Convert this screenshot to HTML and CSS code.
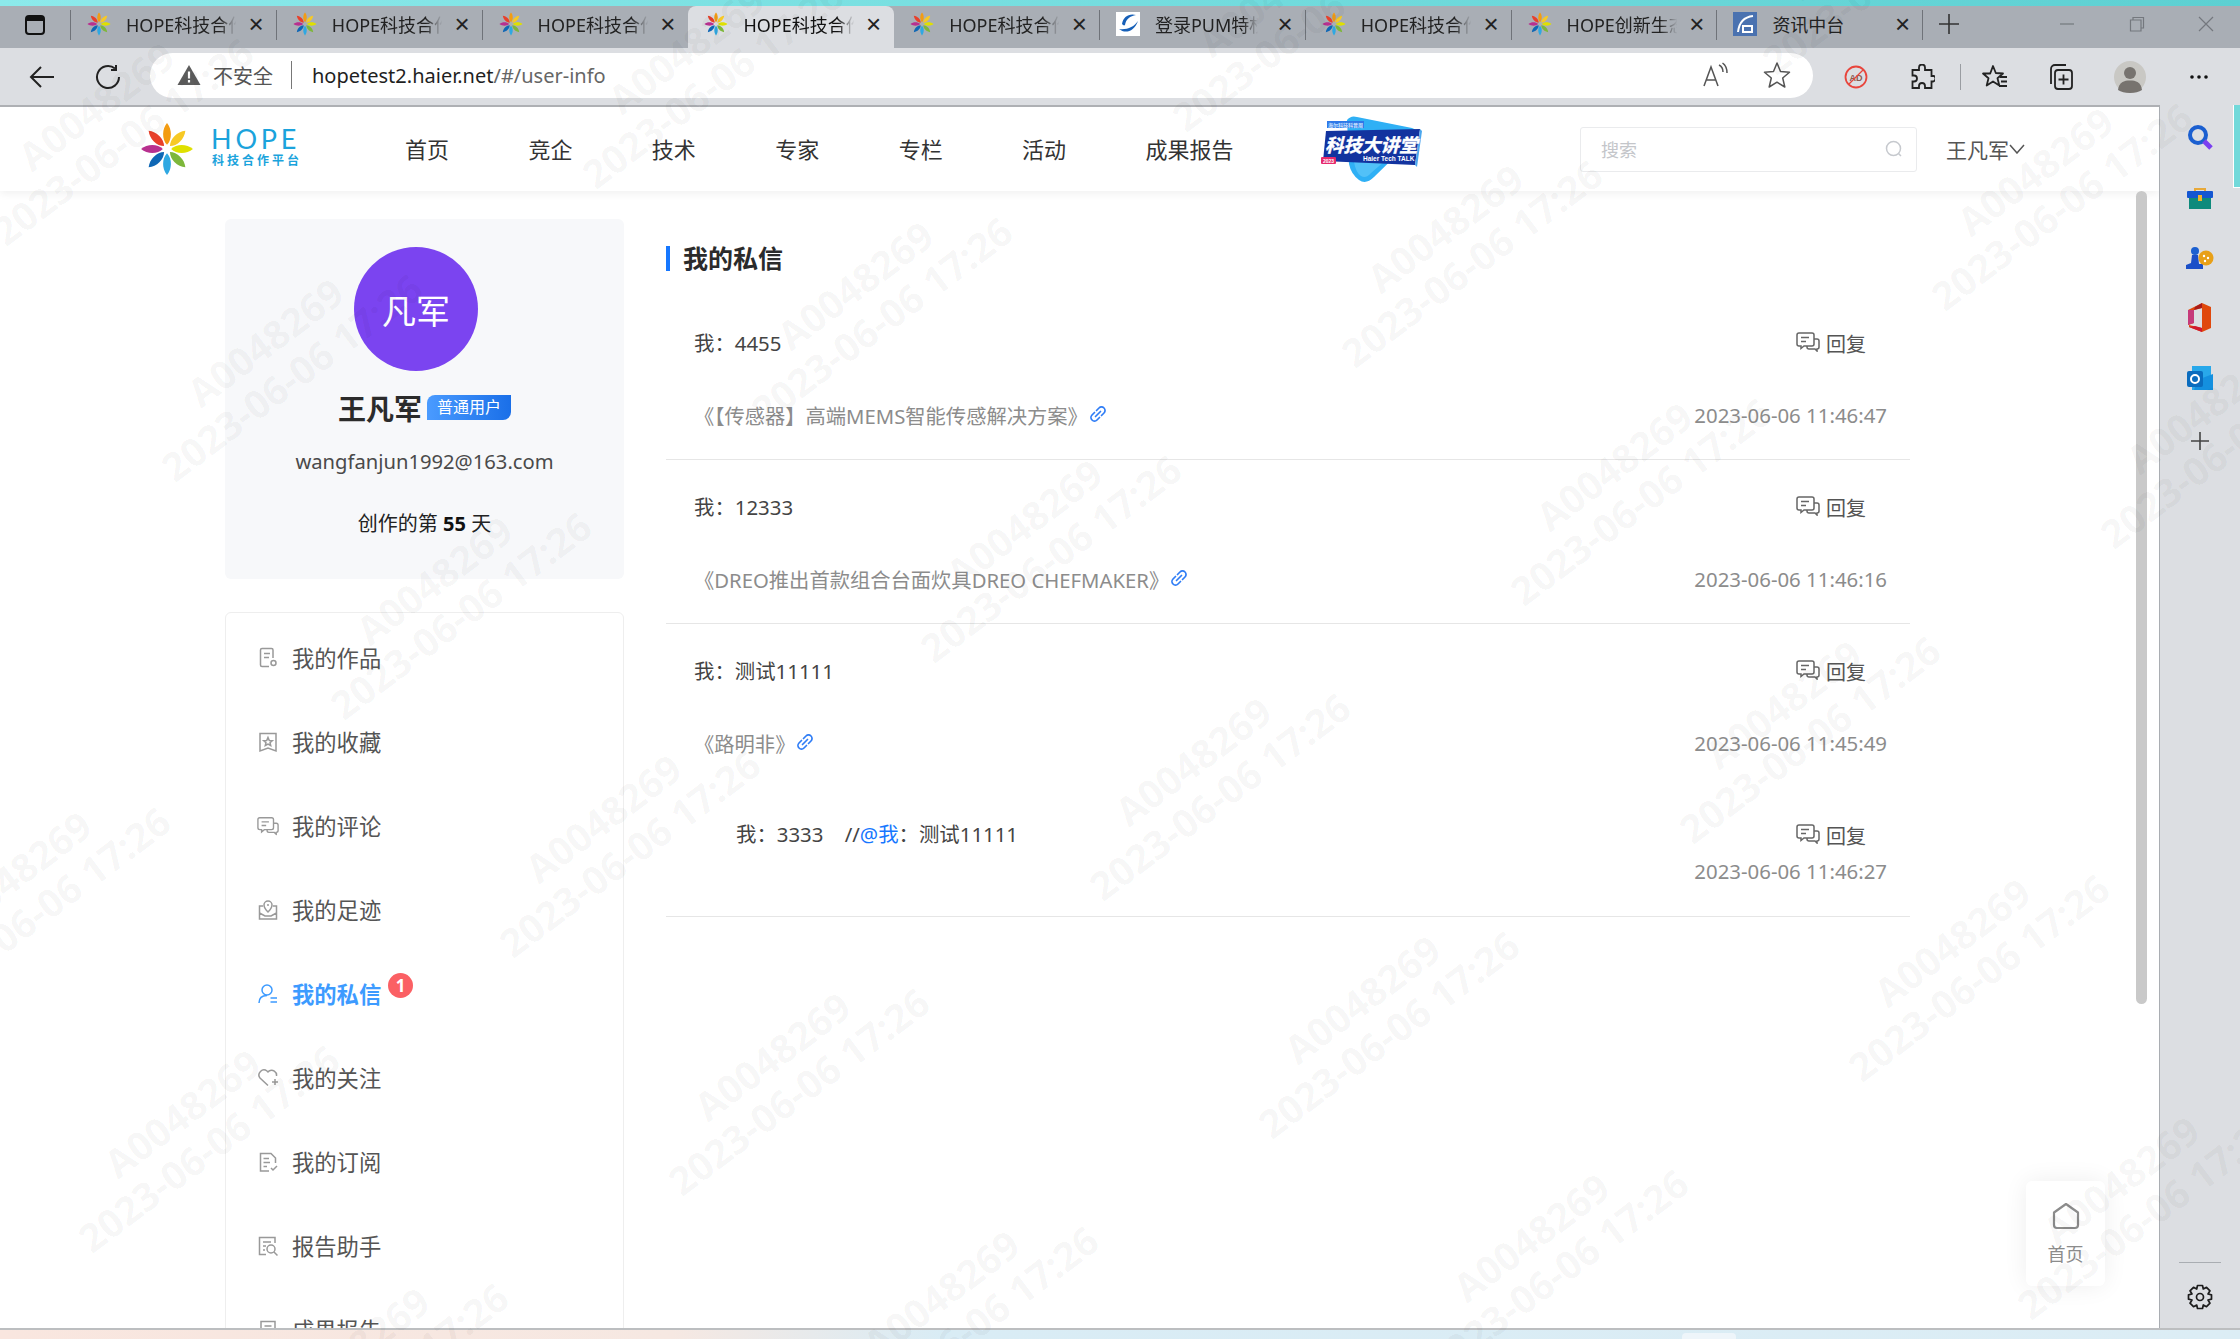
FILE: index.html
```html
<!DOCTYPE html>
<html lang="zh-CN">
<head>
<meta charset="utf-8">
<title>HOPE科技合作平台</title>
<link rel="stylesheet" href="styles.css">
</head>
<body>
<svg class="defs" width="0" height="0">
  <defs>
    <symbol id="flower" viewBox="-26 -26 52 52">
      <g id="petal-set">
        <path fill="#f39c12" d="M0-4C5-9 5-19 0-25C-5-19-5-9 0-4Z"/>
        <path fill="#f7c925" transform="rotate(45)" d="M0-4C5-9 5-19 0-25C-5-19-5-9 0-4Z"/>
        <path fill="#dfe000" transform="rotate(90)" d="M0-4C5-9 5-19 0-25C-5-19-5-9 0-4Z"/>
        <path fill="#7db73a" transform="rotate(135)" d="M0-4C5-9 5-19 0-25C-5-19-5-9 0-4Z"/>
        <path fill="#2fa8e2" transform="rotate(180)" d="M0-4C5-9 5-19 0-25C-5-19-5-9 0-4Z"/>
        <path fill="#0f67b5" transform="rotate(225)" d="M0-4C5-9 5-19 0-25C-5-19-5-9 0-4Z"/>
        <path fill="#b8308f" transform="rotate(270)" d="M0-4C5-9 5-19 0-25C-5-19-5-9 0-4Z"/>
        <path fill="#e8402b" transform="rotate(315)" d="M0-4C5-9 5-19 0-25C-5-19-5-9 0-4Z"/>
      </g>
    </symbol>
    <symbol id="reply" viewBox="0 0 24 20">
      <path fill="none" stroke="currentColor" stroke-width="1.5" d="M3 1h13a2 2 0 0 1 2 2v9a2 2 0 0 1-2 2H8l-3 2.500V14H3a2 2 0 0 1-2-2V3a2 2 0 0 1 2-2Z"/>
      <path fill="none" stroke="currentColor" stroke-width="1.5" d="M5 5.500h8M5 9.500h5M18 7h3a2 2 0 0 1 2 2v6a2 2 0 0 1-2 2v2l-2-2h-6a2 2 0 0 1-2-2v-1"/>
    </symbol>
    <symbol id="link" viewBox="0 0 18 18">
      <path fill="none" stroke="currentColor" stroke-width="1.700" stroke-linecap="round" d="M7.500 5.500l2.500-2.500a3.500 3.500 0 0 1 5 5l-2.500 2.500M10.500 12.500l-2.500 2.500a3.500 3.500 0 0 1-5-5l2.500-2.500M6.500 11.500l5-5"/>
    </symbol>
    <g id="wm">
      <text class="wm-text" text-anchor="middle" transform="rotate(-37)">A0048269</text>
      <text class="wm-text" text-anchor="middle" y="44" transform="rotate(-37)">2023-06-06 17:26</text>
    </g>
  </defs>
</svg>

<div class="strip"></div>

<div class="tabbar">
  <div class="win-btn">
    <svg width="22" height="22" viewBox="0 0 22 22"><rect x="2" y="2" width="18" height="18" rx="3" fill="none" stroke="#111" stroke-width="2"/><rect x="2" y="2" width="18" height="5" fill="#111"/></svg>
  </div>
  <div class="tab"><svg class="fav"><use href="#flower"/></svg><span class="tab-title">HOPE科技合作</span><span class="tab-x">×</span></div>
  <div class="tab"><svg class="fav"><use href="#flower"/></svg><span class="tab-title">HOPE科技合作</span><span class="tab-x">×</span></div>
  <div class="tab tab-before-active"><svg class="fav"><use href="#flower"/></svg><span class="tab-title">HOPE科技合作</span><span class="tab-x">×</span></div>
  <div class="tab tab-active"><svg class="fav"><use href="#flower"/></svg><span class="tab-title">HOPE科技合作</span><span class="tab-x">×</span></div>
  <div class="tab"><svg class="fav"><use href="#flower"/></svg><span class="tab-title">HOPE科技合作</span><span class="tab-x">×</span></div>
  <div class="tab"><svg class="fav" viewBox="0 0 24 24"><rect width="24" height="24" fill="#fff"/><path fill="#1760b8" d="M3 17C9 22 18 20 22 9C18 15 11 18 3 17ZM6 12C7 5 13 1 20 3C14 4 10 7 9 13C8 14 7 13 6 12Z"/></svg><span class="tab-title">登录PUM特权</span><span class="tab-x">×</span></div>
  <div class="tab"><svg class="fav"><use href="#flower"/></svg><span class="tab-title">HOPE科技合作</span><span class="tab-x">×</span></div>
  <div class="tab"><svg class="fav"><use href="#flower"/></svg><span class="tab-title">HOPE创新生态</span><span class="tab-x">×</span></div>
  <div class="tab"><svg class="fav" viewBox="0 0 24 24"><rect width="24" height="24" fill="#4a72b0"/><path fill="none" stroke="#fff" stroke-width="2" d="M5 20C6 11 11 5 20 4M10 20V14H19V20Z"/></svg><span class="tab-title tab-title-plain">资讯中台</span><span class="tab-x">×</span></div>
  <div class="new-tab">
    <svg width="22" height="22" viewBox="0 0 22 22"><path d="M11 1V21M1 11H21" stroke="#333" stroke-width="1.600"/></svg>
  </div>
  <div class="win-controls">
    <svg width="16" height="16" viewBox="0 0 16 16"><path d="M1 8H15" stroke="#74787e" stroke-width="1.200"/></svg>
    <svg width="16" height="16" viewBox="0 0 16 16"><path d="M1.500 4H12V15H1.500ZM4 4V1.500H14.500V12H12" fill="none" stroke="#74787e" stroke-width="1.200"/></svg>
    <svg width="16" height="16" viewBox="0 0 16 16"><path d="M1 1L15 15M15 1L1 15" stroke="#74787e" stroke-width="1.200"/></svg>
  </div>
</div>

<div class="toolbar">
  <div class="nav-btns">
    <svg width="26" height="24" viewBox="0 0 26 24"><path d="M25 12H2M12 2L2 12L12 22" fill="none" stroke="#222" stroke-width="2"/></svg>
    <svg width="26" height="26" viewBox="0 0 26 26"><path d="M20 4.500A11 11 0 1 0 24 13M21 1V6H16" fill="none" stroke="#222" stroke-width="2"/></svg>
  </div>
  <div class="omnibox">
    <svg width="24" height="22" viewBox="0 0 24 22"><path d="M12 1L23.500 21H.5Z" fill="#5c5c5c"/><path d="M12 7.500V14.500M12 16V18.500" stroke="#fff" stroke-width="2.200"/></svg>
    <span class="insecure">不安全</span>
    <span class="omni-sep"></span>
    <span class="url"><span class="url-host">hopetest2.haier.net</span>/#/user-info</span>
    <svg class="omni-read" width="28" height="26" viewBox="0 0 28 26"><path d="M1 24L8 5L15 24M3.500 18H12.500" fill="none" stroke="#555" stroke-width="1.500"/><path d="M16 3Q20 5 20 10M19.500 1Q24 4 24 11" fill="none" stroke="#555" stroke-width="1.500"/></svg>
    <svg class="omni-star" width="28" height="28" viewBox="0 0 28 28"><path d="M14 2L17.500 10.500L26.500 11.200L19.700 17L21.800 26L14 21.200L6.200 26L8.300 17L1.500 11.200L10.500 10.500Z" fill="none" stroke="#555" stroke-width="1.500" stroke-linejoin="round"/></svg>
  </div>
  <div class="tool-icons">
    <svg class="ti-ad" width="24" height="24" viewBox="0 0 24 24"><circle cx="12" cy="12" r="10.500" fill="none" stroke="#e8453c" stroke-width="1.800"/><text class="ad-text" x="12" y="15.500" text-anchor="middle">AD</text><path d="M4.500 19.500L19.500 4.500" stroke="#e8453c" stroke-width="1.200"/></svg>
    <svg class="ti-ext" width="26" height="26" viewBox="0 0 26 26"><path d="M10 3.500a3 3 0 0 1 6 0V6h6.500v6H25a3 3 0 0 1-1 5.500h-1.500V24H16v-2a3 3 0 0 0-6 0v2H3.500v-6.500H5a3 3 0 0 0 0-6H3.500V6H10Z" fill="none" stroke="#222" stroke-width="1.800"/></svg>
    <span class="tool-sep"></span>
    <svg class="ti-fav" width="28" height="28" viewBox="0 0 28 28"><path d="M12 3L14.800 10L22 10.500L16.500 15.200L18.300 22.500L12 18.500L5.700 22.500L7.500 15.200L2 10.500L9.200 10.500Z" fill="none" stroke="#222" stroke-width="1.800" stroke-linejoin="round"/><path d="M19 14H26M20 18.500H26M18 23H26" stroke="#222" stroke-width="1.800"/></svg>
    <svg class="ti-col" width="28" height="28" viewBox="0 0 28 28"><path d="M4 21V6a4 4 0 0 1 4-4H19" fill="none" stroke="#222" stroke-width="1.800"/><rect x="8" y="7" width="17" height="19" rx="3" fill="none" stroke="#222" stroke-width="1.800"/><path d="M16.500 11.500V21.500M11.500 16.500H21.500" stroke="#222" stroke-width="1.800"/></svg>
    <svg class="ti-user" width="32" height="32" viewBox="0 0 32 32"><circle cx="16" cy="16" r="16" fill="#c9c8c4"/><circle cx="16" cy="12" r="6" fill="#77736f"/><path d="M4 29C5 21 10 19.500 16 19.500S27 21 28 29C25 31 21 32 16 32S7 31 4 29Z" fill="#77736f"/></svg>
    <svg class="ti-more" width="20" height="6" viewBox="0 0 20 6"><circle cx="3" cy="3" r="1.800" fill="#111"/><circle cx="10" cy="3" r="1.800" fill="#111"/><circle cx="17" cy="3" r="1.800" fill="#111"/></svg>
  </div>
</div>

<div class="viewport">
  <div class="page">
    <header class="site-header">
      <div class="logo">
        <svg class="logo-flower"><use href="#flower"/></svg>
        <div class="logo-text">
          <span class="logo-hope">HOPE</span>
          <span class="logo-sub">科技合作平台</span>
        </div>
      </div>
      <nav class="site-nav">
        <span>首页</span><span>竞企</span><span>技术</span><span>专家</span><span>专栏</span><span>活动</span><span>成果报告</span>
      </nav>
      <svg class="talk-logo" width="104" height="68" viewBox="0 0 104 68">
        <path d="M27 4Q31-1 37 1L92 12Q100 15 95 21L54 61Q46 69 39 64Q31 58 29 48Z" fill="#2fb0f5"/>
        <path d="M34 46Q36 57 41 60Q46 63 51 57L66 44Z" fill="#52c1f8"/>
        <path d="M6 15L100 13L95 49L3 45Z" fill="#12339f"/>
        <path d="M100 13L102 15L97 51L95 49Z" fill="#4ba7ee"/>
        <rect x="7" y="5" width="37" height="7" fill="#2e78e8"/>
        <text class="tl-top" x="25.500" y="10.500" text-anchor="middle">海尔科技科普周</text>
        <text class="tl-main" x="5" y="36">科技大讲堂</text>
        <text class="tl-en" x="43" y="45">Haier Tech TALK</text>
        <rect x="1" y="41" width="15" height="7" rx="1" fill="#e62a6d"/>
        <text class="tl-year" x="8.500" y="46.500" text-anchor="middle">2023</text>
      </svg>
      <div class="search">
        <span>搜索</span>
        <svg width="18" height="18" viewBox="0 0 18 18"><circle cx="8.500" cy="8.500" r="7" fill="none" stroke="#c6c9ce" stroke-width="1.500"/><path d="M13.500 13.500L16 16" stroke="#c6c9ce" stroke-width="1.500"/></svg>
      </div>
      <div class="user-name">王凡军<svg width="16" height="10" viewBox="0 0 16 10"><path d="M1 1L8 9L15 1" fill="none" stroke="#555" stroke-width="1.500"/></svg></div>
    </header>

    <div class="content">
      <aside class="side">
        <section class="profile">
          <div class="avatar">凡军</div>
          <div class="name-row"><span class="name">王凡军</span><span class="tag">普通用户</span></div>
          <div class="email">wangfanjun1992@163.com</div>
          <div class="days">创作的第 <b>55</b> 天</div>
        </section>
        <ul class="menu">
          <li class="menu-item"><svg class="mi" viewBox="0 0 22 22"><path d="M16 11V3a1.500 1.500 0 0 0-1.500-1.500H5A1.500 1.500 0 0 0 3.500 3v15A1.500 1.500 0 0 0 5 19.500h7M7 6.500h6M7 10.500h5"/><circle cx="16.500" cy="16" r="2.500"/></svg><span>我的作品</span></li>
          <li class="menu-item"><svg class="mi" viewBox="0 0 22 22"><path d="M3 2.500H19V20L11 17L3 20ZM11 6.500L12.300 9.500L15.300 9.700L13 11.700L13.700 14.500L11 13L8.300 14.500L9 11.700L6.700 9.700L9.700 9.500Z"/></svg><span>我的收藏</span></li>
          <li class="menu-item"><svg class="mi" viewBox="0 0 24 20"><use href="#reply"/></svg><span>我的评论</span></li>
          <li class="menu-item"><svg class="mi" viewBox="0 0 22 22"><path d="M6 7H2.500V20H19.500V7H16M2.500 14L8 17H14L19.500 14"/><path d="M11 13C8 10 7 8 7 6A4 4 0 0 1 15 6C15 8 14 10 11 13ZM11 5V7"/></svg><span>我的足迹</span></li>
          <li class="menu-item menu-active"><svg class="mi" viewBox="0 0 22 22"><circle cx="10" cy="7" r="5"/><path d="M2 20C2 15 5 12.500 10 12.500M13.500 15H20M13.500 19H20"/></svg><span>我的私信</span><span class="badge">1</span></li>
          <li class="menu-item"><svg class="mi" viewBox="0 0 22 22"><path d="M11 18.500L3 11A5 5 0 0 1 10 4L11 5L12 4A5 5 0 0 1 19.500 9M15 15H21M18 12V18"/></svg><span>我的关注</span></li>
          <li class="menu-item"><svg class="mi" viewBox="0 0 22 22"><path d="M12 20H3.500V2.500H14L18.500 7V12M6.500 7.500H12M6.500 11.500H13M6.500 15.500H10M14 17L16 19L20 15"/></svg><span>我的订阅</span></li>
          <li class="menu-item"><svg class="mi" viewBox="0 0 22 22"><path d="M18 8V2.500H2.500V19.500H9M6 7H14M6 11H9M6 15H8"/><circle cx="14" cy="14" r="4"/><path d="M17 17L20.500 20.500"/></svg><span>报告助手</span></li>
          <li class="menu-item"><svg class="mi" viewBox="0 0 22 22"><path d="M4 2.500H18V19.500H4ZM7.500 7H14.500M7.500 11H14.500"/></svg><span>成果报告</span></li>
        </ul>
      </aside>

      <main class="main">
        <h1 class="title">我的私信</h1>

        <article class="msg">
          <div class="row">
            <span class="msg-text">我：4455</span>
            <span class="reply-btn"><svg class="reply-ic"><use href="#reply"/></svg>回复</span>
          </div>
          <div class="row row-gap">
            <span class="source">《【传感器】高端MEMS智能传感解决方案》<svg class="link-ic"><use href="#link"/></svg></span>
            <span class="time">2023-06-06 11:46:47</span>
          </div>
        </article>

        <article class="msg">
          <div class="row">
            <span class="msg-text">我：12333</span>
            <span class="reply-btn"><svg class="reply-ic"><use href="#reply"/></svg>回复</span>
          </div>
          <div class="row row-gap">
            <span class="source">《DREO推出首款组合台面炊具DREO CHEFMAKER》<svg class="link-ic"><use href="#link"/></svg></span>
            <span class="time">2023-06-06 11:46:16</span>
          </div>
        </article>

        <article class="msg">
          <div class="row">
            <span class="msg-text">我：测试11111</span>
            <span class="reply-btn"><svg class="reply-ic"><use href="#reply"/></svg>回复</span>
          </div>
          <div class="row row-gap">
            <span class="source">《路明非》<svg class="link-ic"><use href="#link"/></svg></span>
            <span class="time">2023-06-06 11:45:49</span>
          </div>
          <div class="row nested">
            <span class="msg-text">我：3333&nbsp;&nbsp;&nbsp;&nbsp;//<span class="at">@我</span>：测试11111</span>
            <span class="reply-btn reply-nested"><svg class="reply-ic"><use href="#reply"/></svg>回复</span>
          </div>
          <div class="row row-end">
            <span class="time">2023-06-06 11:46:27</span>
          </div>
        </article>
      </main>
    </div>

    <div class="scrollbar"></div>

    <div class="home-float">
      <svg width="28" height="28" viewBox="0 0 28 28"><path d="M14 2L26 10.500V23a3 3 0 0 1-3 3H5a3 3 0 0 1-3-3V10.500Z" fill="none" stroke="#8c8c8c" stroke-width="2.200" stroke-linejoin="round"/></svg>
      <span>首页</span>
    </div>
  </div>

  <aside class="panel">
    <div class="panel-top">
      <span class="panel-slot"><svg width="26" height="26" viewBox="0 0 26 26"><circle cx="11" cy="10" r="8" fill="none" stroke="#1b5fd0" stroke-width="4"/><path d="M17 16L24 23" stroke="#7a3ff0" stroke-width="5"/></svg></span>
      <span class="panel-slot"><svg width="26" height="22" viewBox="0 0 26 22"><path d="M8 5V2H18V5" fill="none" stroke="#e8a93a" stroke-width="2"/><rect y="4" width="26" height="7" rx="1" fill="#1456d2"/><rect x="2" y="11" width="22" height="11" fill="#0e8a7c"/><rect x="11" y="8" width="4" height="6" fill="#f0b32c"/></svg></span>
      <span class="panel-slot"><svg width="28" height="24" viewBox="0 0 28 24"><circle cx="9" cy="5" r="4" fill="#1b5fd0"/><path d="M6 9H12L13 18H17V23H0V19L5 17Z" fill="#1b4fc8"/><circle cx="20" cy="12" r="7.500" fill="#e8a018"/><circle cx="18" cy="10" r="1.200" fill="#fff"/><circle cx="22" cy="12" r="1.200" fill="#fff"/><circle cx="19" cy="15" r="1.200" fill="#fff"/></svg></span>
      <span class="panel-slot"><svg width="26" height="30" viewBox="0 0 26 30"><path d="M15 0L24 4V25L15 29L2 24V22L15 25V5L7 7V20L1 22V7Z" fill="#e0480c"/><path d="M1 7L7 7V20L1 22Z" fill="#c63a7a"/><path d="M15 0L8 4L7 7L15 5Z" fill="#a81a1a"/><path d="M2 24L15 29V25L8 23Z" fill="#d0182e"/></svg></span>
      <span class="panel-slot"><svg width="26" height="26" viewBox="0 0 26 26"><path d="M5 1H24V25H5Z" fill="#28a8ea"/><path d="M10 15L26 9V25H7Z" fill="#1490df"/><rect y="6" width="16" height="16" rx="2" fill="#0a6cbe"/><circle cx="8" cy="14" r="4" fill="none" stroke="#fff" stroke-width="2"/></svg></span>
      <span class="panel-slot panel-plus"><svg width="18" height="18" viewBox="0 0 18 18"><path d="M9 0V18M0 9H18" stroke="#444" stroke-width="1.600"/></svg></span>
    </div>
    <div class="panel-bottom">
      <span class="panel-sep"></span>
      <svg width="26" height="26" viewBox="0 0 26 26"><path d="M10.500 1.500H15.500L16.300 5L19.500 3.300L23 6.800L21 10L24.500 10.800V15.200L21 16L23 19.200L19.500 22.700L16.300 21L15.500 24.500H10.500L9.700 21L6.500 22.700L3 19.200L5 16L1.500 15.200V10.800L5 10L3 6.800L6.500 3.300L9.700 5Z" fill="none" stroke="#1c1c1c" stroke-width="1.700" stroke-linejoin="round"/><circle cx="13" cy="13" r="3.500" fill="none" stroke="#1c1c1c" stroke-width="1.700"/></svg>
    </div>
  </aside>
  <div class="desk-peek"></div>
</div>

<div class="desk"><span class="desk-tab"></span></div>

<svg class="watermark" width="2240" height="1339" viewBox="0 0 2240 1339" aria-hidden="true">
  <g transform="translate(16 5)">
    <use href="#wm" x="89" y="113"/><use href="#wm" x="679" y="56"/><use href="#wm" x="1269" y="-1"/><use href="#wm" x="1859" y="-58"/>
    <use href="#wm" x="258" y="349"/><use href="#wm" x="848" y="292"/><use href="#wm" x="1438" y="235"/><use href="#wm" x="2028" y="178"/>
    <use href="#wm" x="427" y="587"/><use href="#wm" x="1017" y="530"/><use href="#wm" x="1607" y="473"/><use href="#wm" x="2197" y="416"/>
    <use href="#wm" x="6" y="882"/><use href="#wm" x="596" y="825"/><use href="#wm" x="1186" y="768"/><use href="#wm" x="1776" y="711"/>
    <use href="#wm" x="175" y="1120"/><use href="#wm" x="765" y="1063"/><use href="#wm" x="1355" y="1006"/><use href="#wm" x="1945" y="949"/>
    <use href="#wm" x="344" y="1358"/><use href="#wm" x="934" y="1301"/><use href="#wm" x="1524" y="1244"/><use href="#wm" x="2114" y="1187"/>
    <use href="#wm" x="1693" y="1482"/>
  </g>
</svg>
</body>
</html>
```

FILE: styles.css
```css
* { box-sizing: border-box; }
html, body { margin: 0; padding: 0; }
body {
  position: relative;
  width: 2240px;
  height: 1339px;
  overflow: hidden;
  background: #fff;
  color: #444;
  font-family: "Noto Sans", "Noto Sans CJK SC", "Liberation Sans", sans-serif;
  font-size: 20px;
}
.defs { position: absolute; }
ul { list-style: none; margin: 0; padding: 0; }
h1 { margin: 0; }

/* browser chrome */
.strip { height: 6px; background: linear-gradient(90deg, #8ceaeb, #5dd0d2); }
.tabbar { height: 42px; display: flex; background: #a9aeb5; color: #222; font-size: 18px; }
.win-btn { width: 71px; display: flex; align-items: center; justify-content: center; margin: 4px 0 8px; border-right: 1px solid #6f7379; }
.tab { width: 205.800px; display: flex; align-items: center; padding: 0 13px 6px 16px; position: relative; }
.tab::after { content: ""; position: absolute; right: 0; top: 4px; bottom: 8px; width: 1px; background: #6f7379; }
.tab-before-active::after, .tab-active::after { display: none; }
.tab-active { background: #dcdee2; border-radius: 8px 8px 0 0; color: #111; }
.fav { width: 24px; height: 24px; flex: none; }
.tab-title { margin-left: 15px; white-space: nowrap; -webkit-mask-image: linear-gradient(90deg, #000 78%, transparent 92%); mask-image: linear-gradient(90deg, #000 78%, transparent 92%); }
.tab-title-plain { -webkit-mask-image: none; mask-image: none; }
.tab-x { margin-left: auto; font-family: "Liberation Sans", sans-serif; font-size: 26px; line-height: 1; color: #222; }
.new-tab { width: 52px; display: flex; align-items: center; justify-content: center; padding-bottom: 6px; }
.win-controls { flex: 1; display: flex; align-items: center; justify-content: space-between; padding: 0 26px 6px 84px; }

.toolbar { height: 57px; display: flex; align-items: center; background: #dcdee2; }
.nav-btns { width: 150px; display: flex; align-items: center; gap: 40px; padding-left: 29px; }
.omnibox { width: 1663px; height: 45px; margin-top: -3px; display: flex; align-items: center; background: #fff; border-radius: 23px; padding: 0 22px 0 27px; font-size: 20px; }
.insecure { margin-left: 12px; color: #555; }
.omni-sep { width: 1px; height: 28px; background: #777; margin: 0 20px 0 18px; }
.url { color: #666; }
.url-host { color: #1f1f1f; }
.omni-read { margin-left: auto; }
.omni-star { margin-left: 32px; }
.tool-icons { flex: 1; display: flex; align-items: center; padding-left: 31px; }
.ad-text { font: 700 9px "Liberation Sans", sans-serif; fill: #8a5a50; }
.ti-ext { margin-left: 41px; }
.tool-sep { width: 1px; height: 26px; background: #9a9da2; margin-left: 25px; }
.ti-fav { margin-left: 20px; }
.ti-col { margin-left: 38px; }
.ti-user { margin-left: 39px; }
.ti-more { margin-left: 43px; }

.viewport { height: 1223px; display: flex; position: relative; overflow: hidden; }
.page { width: 2160px; border-top: 2px solid #aeb0b4; border-right: 1px solid #a9adb2; position: relative; overflow: hidden; background: #fff; flex: none; }

/* site header */
.site-header { height: 84px; display: flex; align-items: center; background: #fff; box-shadow: 0 3px 8px rgba(0, 0, 0, .06); position: relative; }
.logo { display: flex; align-items: center; padding-left: 140px; width: 405px; }
.logo-flower { width: 54px; height: 54px; flex: none; }
.logo-text { margin-left: 18px; display: flex; flex-direction: column; color: #1ba3dc; }
.logo-hope { font-family: "Lato", sans-serif; font-weight: 400; font-size: 27px; line-height: 24px; letter-spacing: 3.800px; width: 88px; margin-left: -1px; white-space: nowrap; }
.logo-sub { font-size: 12px; line-height: 20px; letter-spacing: 3px; white-space: nowrap; font-weight: 700; }
.site-nav { display: flex; gap: 79.400px; width: 915px; font-size: 22px; line-height: 28px; padding-bottom: 1px; color: #333; }
.talk-logo { flex: none; margin-top: 1px; }
.tl-top { font: 700 5px "Noto Sans CJK SC", sans-serif; fill: #cfe6ff; }
.tl-main { font: italic 700 18.500px "Noto Sans CJK SC", sans-serif; fill: #fff; stroke: #fff; stroke-width: .4px; }
.tl-en { font: 700 6.500px "Liberation Sans", sans-serif; fill: #fff; }
.tl-year { font: 700 5px "Liberation Sans", sans-serif; fill: #fff; }
.search { width: 337px; height: 45px; margin-left: 156px; display: flex; align-items: center; justify-content: space-between; padding: 0 13px 0 20px; border: 1px solid #eaebed; border-radius: 3px; font-size: 18px; color: #c4c6ca; flex: none; }
.user-name { margin-left: 29px; font-size: 21px; color: #555; display: flex; align-items: center; gap: 0; white-space: nowrap; }

/* content */
.content { display: flex; gap: 42px; padding: 28px 0 0 225px; }
.side { width: 399px; flex: none; }
.profile { height: 360px; padding-top: 28px; background: #f7f8fa; border-radius: 6px; display: flex; flex-direction: column; align-items: center; }
.avatar { width: 124px; height: 124px; border-radius: 50%; background: #7b44f0; color: #fff; font-size: 34px; display: flex; align-items: center; justify-content: center; margin-left: -17px; }
.name-row { margin-top: 22px; height: 30px; display: flex; align-items: center; gap: 5px; }
.name { font-size: 28px; font-weight: 700; color: #2b2b2b; }
.tag { width: 84px; height: 25px; margin-top: -2px; background: linear-gradient(90deg, #4a9bff, #1a6fe8); color: #fff; font-size: 16px; line-height: 25px; text-align: center; border-radius: 8px 0 8px 0; }
.email { margin-top: 23px; line-height: 30px; color: #4a4a4a; font-size: 20.200px; }
.days { margin-top: 33px; line-height: 30px; color: #222; }
.days b { color: #111; }

.menu { margin-top: 33px; height: 800px; padding-top: 2px; border: 1px solid #eeeeee; border-radius: 6px; }
.menu-item { height: 84px; display: flex; align-items: center; padding-left: 31px; font-size: 22.300px; color: #555; position: relative; }
.mi { width: 22px; height: 22px; margin: 2px 13px 0 0; flex: none; fill: none; stroke: #999; stroke-width: 1.500; color: #999; }
.menu-active { color: #3d9bff; font-weight: 700; }
.menu-active .mi { stroke: #3d9bff; }
.badge { position: absolute; left: 162px; top: 22px; width: 25px; height: 25px; border-radius: 50%; background: #fb6064; color: #fff; font-size: 17px; line-height: 25px; text-align: center; }

.main { width: 1244px; flex: none; padding-top: 27px; }
.title { height: 25px; border-left: 4px solid #1677ff; padding-left: 13px; margin-bottom: 25px; font-size: 25px; line-height: 25px; font-weight: 700; color: #2b2b2b; }
.msg { padding: 27px 23px 22px 28px; border-bottom: 1px solid #e6e6e6; }
.row { height: 40px; display: flex; align-items: center; justify-content: space-between; font-size: 20.400px; }
.row-gap { margin-top: 34px; }
.row-end { justify-content: flex-end; }
.row-end .time { margin-top: -6px; }
.nested { margin-top: 49px; padding-left: 42px; }
.msg-text { color: #444; white-space: nowrap; margin-top: -3px; }
.at { color: #1677ff; }
.reply-btn { display: flex; align-items: center; margin-right: 21px; color: #555; font-size: 20px; }
.reply-nested { margin-top: 2px; }
.reply-ic { width: 24px; height: 20px; margin-right: 6px; margin-top: -3px; color: #666; }
.source { display: flex; align-items: center; margin-top: -4px; color: #8c8c8c; white-space: nowrap; font-size: 20.300px; }
.link-ic { width: 18px; height: 18px; margin-left: 1px; margin-top: -3px; color: #2f7df6; }
.time { color: #8c8c8c; margin-top: -4px; }

.scrollbar { position: absolute; left: 2136px; top: 84px; width: 11px; height: 813px; border-radius: 6px; background: #c9c9c9; }
.home-float { position: absolute; left: 2026px; top: 1074px; width: 79px; height: 105px; padding-top: 21px; display: flex; flex-direction: column; align-items: center; gap: 11px; background: #fff; border-radius: 6px; box-shadow: 0 0 24px rgba(0, 0, 0, .07); font-size: 18px; line-height: 26px; color: #8c8c8c; }

/* edge side panel */
.panel { flex: 1; background: #dcdee2; display: flex; flex-direction: column; justify-content: space-between; align-items: center; padding: 3px 0 18px; }
.panel-top { display: flex; flex-direction: column; align-items: center; }
.panel-slot { height: 60px; display: flex; align-items: center; justify-content: center; }
.panel-plus { margin-top: 3px; }
.panel-bottom { display: flex; flex-direction: column; align-items: center; gap: 21px; }
.panel-sep { width: 42px; height: 1px; background: #a9adb2; }
.desk-peek { position: absolute; right: 0; top: -12px; width: 7px; height: 95px; background: #72d9da; border-left: 1px solid #fff; border-bottom: 1px solid #fff; }

.desk { height: 11px; border-top: 2px solid #bcbec0; background: linear-gradient(90deg, #f9e6df 0%, #f6e8e2 30%, #d9ecf5 42%, #dcedf5 100%); position: relative; }
.desk-tab { position: absolute; left: 1682px; top: 3px; width: 54px; height: 8px; background: #eef5fa; border-radius: 4px 4px 0 0; }

/* page watermark */
.watermark { position: absolute; left: 0; top: 0; pointer-events: none; }
.wm-text { font: 700 39px "Open Sans", "Liberation Sans", sans-serif; fill: rgba(0, 0, 0, .045); }
```
